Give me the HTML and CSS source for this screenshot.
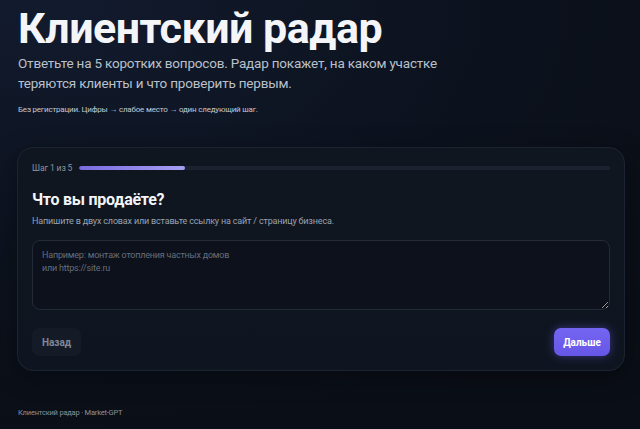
FILE: index.html
```html
<!DOCTYPE html>
<html lang="ru">
<head>
<meta charset="utf-8">
<title>Клиентский радар</title>
<link rel="stylesheet" href="styles.css">
</head>
<body>
<div class="page">
  <h1 class="title">Клиентский радар</h1>
  <p class="lead">Ответьте на 5 коротких вопросов. Радар покажет, на каком участке<br>теряются клиенты и что проверить первым.</p>
  <p class="note">Без регистрации. Цифры → слабое место → один следующий шаг.</p>

  <section class="card">
    <div class="progress-row">
      <span class="step">Шаг 1 из 5</span>
      <div class="track"><div class="fill" style="width:20%"></div></div>
    </div>
    <h2 class="question">Что вы продаёте?</h2>
    <p class="hint">Напишите в двух словах или вставьте ссылку на сайт / страницу бизнеса.</p>
    <textarea class="answer" placeholder="Например: монтаж отопления частных домов&#10;или https://site.ru"></textarea>
    <div class="actions">
      <button class="btn btn-back">Назад</button>
      <button class="btn btn-next">Дальше</button>
    </div>
  </section>

  <footer class="footer">Клиентский радар · Market-GPT</footer>
</div>
</body>
</html>
```
FILE: styles.css
```css
* { box-sizing: border-box; }
html, body {
  margin: 0;
  height: 100%;
}
body {
  background: radial-gradient(ellipse 760px 460px at 8% 0%, #121b2e 0%, #0c121e 55%, #0a0e16 100%);
  background-color: #0a0e16;
  color: #e6e9ef;
  font-family: Roboto, "Noto Sans", sans-serif;
}
.page {
  padding: 5px 15px 0 17px;
}
.title {
  margin: 0 0 0 1px;
  font-size: 43px;
  line-height: 46px;
  font-weight: 700;
  letter-spacing: -0.5px;
  color: #f3f5f8;
}
.lead {
  margin: 2px 0 0 1px;
  font-size: 13.5px;
  line-height: 20px;
  letter-spacing: -0.2px;
  color: #b9c0cb;
}
.note {
  margin: 10px 0 0 1px;
  font-size: 8px;
  line-height: 13px;
  letter-spacing: -0.2px;
  color: #c3c8d1;
}
.card {
  margin-top: 31px;
  background: linear-gradient(180deg, #10161f 0%, #0f1520 100%);
  border: 1px solid #1d2431;
  border-radius: 16px;
  padding: 14px 14px 14px 14px;
  box-shadow: 0 6px 24px rgba(0, 0, 0, 0.35);
}
.progress-row {
  display: flex;
  align-items: center;
  gap: 7px;
  height: 12px;
}
.step {
  font-size: 8.5px;
  letter-spacing: -0.1px;
  color: #8d95a3;
  white-space: nowrap;
}
.track {
  flex: 1;
  height: 4px;
  border-radius: 2px;
  background: #1c2330;
  overflow: hidden;
}
.fill {
  height: 100%;
  border-radius: 2px;
  background: linear-gradient(90deg, #7a6be0, #a89ef3);
}
.question {
  margin: 15px 0 0;
  font-size: 16px;
  line-height: 22px;
  font-weight: 700;
  letter-spacing: -0.25px;
  color: #f3f5f8;
}
.hint {
  margin: 4px 0 0;
  font-size: 9px;
  line-height: 13px;
  letter-spacing: -0.17px;
  color: #9aa2af;
}
.answer {
  display: block;
  width: 100%;
  height: 70px;
  margin-top: 12px;
  padding: 8px 9px;
  background: #0c111b;
  border: 1px solid #232b39;
  border-radius: 8px;
  color: #d0d5dd;
  font-family: Roboto, "Noto Sans", sans-serif;
  font-size: 9px;
  line-height: 13px;
  letter-spacing: -0.2px;
  resize: vertical;
  outline: none;
}
.answer::placeholder {
  color: #666e7c;
}
.actions {
  display: flex;
  justify-content: space-between;
  margin-top: 18px;
}
.btn {
  height: 28px;
  border: none;
  border-radius: 7px;
  font-family: Roboto, "Noto Sans", sans-serif;
  font-size: 10px;
  font-weight: 700;
  padding: 0;
}
.btn-back {
  width: 49px;
  background: #141b26;
  color: #7f8898;
}
.btn-next {
  width: 56px;
  background: linear-gradient(180deg, #7466f2, #6656e6);
  color: #ffffff;
  box-shadow: 0 0 10px rgba(110, 94, 240, 0.45);
}
.footer {
  margin-top: 36px;
  margin-left: 1px;
  font-size: 7.5px;
  line-height: 12px;
  letter-spacing: -0.2px;
  color: #8a919d;
}
```
